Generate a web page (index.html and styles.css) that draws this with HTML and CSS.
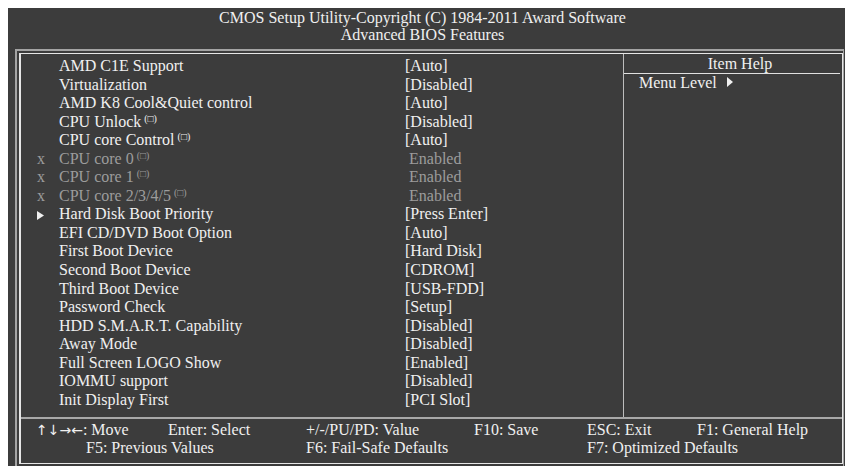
FILE: index.html
```html
<!DOCTYPE html>
<html lang="en">
<head>
    <meta charset="UTF-8">
    <title>Advanced BIOS Features</title>
    <link rel="stylesheet" href="styles.css">
</head>
<body>
    <div class="screen">
        <div class="title">
            <div>CMOS Setup Utility-Copyright (C) 1984-2011 Award Software</div>
            <div>Advanced BIOS Features</div>
        </div>

        <div class="frame">
            <div class="inner">
                <div class="main">
                    <div class="list">
                        <div class="row"><span class="mark"></span><span class="label">AMD C1E Support</span><span class="value">[Auto]</span></div>
                        <div class="row"><span class="mark"></span><span class="label">Virtualization</span><span class="value">[Disabled]</span></div>
                        <div class="row"><span class="mark"></span><span class="label">AMD K8 Cool&amp;Quiet control</span><span class="value">[Auto]</span></div>
                        <div class="row"><span class="mark"></span><span class="label">CPU Unlock<sup class="note">(□)</sup></span><span class="value">[Disabled]</span></div>
                        <div class="row"><span class="mark"></span><span class="label">CPU core Control<sup class="note">(□)</sup></span><span class="value">[Auto]</span></div>
                        <div class="row off"><span class="mark">x</span><span class="label">CPU core 0<sup class="note">(□)</sup></span><span class="value">&nbsp;Enabled</span></div>
                        <div class="row off"><span class="mark">x</span><span class="label">CPU core 1<sup class="note">(□)</sup></span><span class="value">&nbsp;Enabled</span></div>
                        <div class="row off"><span class="mark">x</span><span class="label">CPU core 2/3/4/5<sup class="note">(□)</sup></span><span class="value">&nbsp;Enabled</span></div>
                        <div class="row"><span class="mark"><svg class="tri" width="7" height="9" viewBox="0 0 7 9"><path d="M0 0 L7 4.5 L0 9 Z" fill="#f0f0f0"/></svg></span><span class="label">Hard Disk Boot Priority</span><span class="value">[Press Enter]</span></div>
                        <div class="row"><span class="mark"></span><span class="label">EFI CD/DVD Boot Option</span><span class="value">[Auto]</span></div>
                        <div class="row"><span class="mark"></span><span class="label">First Boot Device</span><span class="value">[Hard Disk]</span></div>
                        <div class="row"><span class="mark"></span><span class="label">Second Boot Device</span><span class="value">[CDROM]</span></div>
                        <div class="row"><span class="mark"></span><span class="label">Third Boot Device</span><span class="value">[USB-FDD]</span></div>
                        <div class="row"><span class="mark"></span><span class="label">Password Check</span><span class="value">[Setup]</span></div>
                        <div class="row"><span class="mark"></span><span class="label">HDD S.M.A.R.T. Capability</span><span class="value">[Disabled]</span></div>
                        <div class="row"><span class="mark"></span><span class="label">Away Mode</span><span class="value">[Disabled]</span></div>
                        <div class="row"><span class="mark"></span><span class="label">Full Screen LOGO Show</span><span class="value">[Enabled]</span></div>
                        <div class="row"><span class="mark"></span><span class="label">IOMMU support</span><span class="value">[Disabled]</span></div>
                        <div class="row"><span class="mark"></span><span class="label">Init Display First</span><span class="value">[PCI Slot]</span></div>
                    </div>

                    <div class="help">
                        <div class="help-head">Item Help</div>
                        <div class="help-body">Menu Level <svg class="tri-help" width="6" height="10" viewBox="0 0 6 10"><path d="M0 0 L6 5 L0 10 Z" fill="#f0f0f0"/></svg></div>
                    </div>
                </div>

                <div class="footer">
                    <span class="k1"><span class="arrows">↑↓→←</span>: Move</span>
                    <span class="k2">Enter: Select</span>
                    <span class="k3">+/-/PU/PD: Value</span>
                    <span class="k4">F10: Save</span>
                    <span class="k5">ESC: Exit</span>
                    <span class="k6">F1: General Help</span>
                    <span class="k7">F5: Previous Values</span>
                    <span class="k8">F6: Fail-Safe Defaults</span>
                    <span class="k9">F7: Optimized Defaults</span>
                </div>
            </div>
        </div>
    </div>
</body>
</html>
```

FILE: styles.css
```css
body {
    margin: 0;
    padding: 0;
    background-color: #fff;
    font-family: "Liberation Serif", "Times New Roman", serif;
    font-size: 16px;
    color: #f0f0f0;
}

.screen {
    margin: 8px 0 0 8px;
    width: 837px;
    height: 458px;
    background-color: #3c3c3c;
    display: flex;
    flex-direction: column;
}

.title {
    height: 41px;
    padding-top: 1px;
    box-sizing: border-box;
    text-align: center;
    line-height: 17px;
    padding-right: 8px;
}

.frame {
    margin-left: 7px;
    width: 829px;
    flex: 1;
    box-sizing: border-box;
    border: 2px solid #a4a4a4;
    border-right-width: 1px;
    border-bottom: none;
    padding: 2px 0 2px 2px;
    display: flex;
}

.inner {
    flex: 1;
    border: 1px solid #e6e6e6;
    border-left-width: 2px;
    display: flex;
    flex-direction: column;
}

.main {
    height: 363px;
    display: flex;
    border-bottom: 2px solid #a8a8a8;
}

.list {
    width: 602px;
    padding-top: 3px;
    border-right: 1px solid #bdbdbd;
}

.row {
    display: flex;
    line-height: 18.55px;
    height: 18.55px;
    white-space: nowrap;
}

.mark {
    width: 22px;
    margin-left: 16px;
}

.label {
    width: 346px;
}

.row.off {
    color: #9c9c9c;
}

.note {
    font-size: 10px;
    line-height: 0;
    vertical-align: 5px;
    margin-left: 3px;
}

.tri {
    vertical-align: -1px;
}

.help {
    flex: 1;
}

.help-head {
    height: 19px;
    line-height: 19px;
    text-align: center;
    padding-left: 16px;
    border-bottom: 1px solid #e0e0e0;
    margin-right: 2px;
}

.help-body {
    padding-left: 15px;
    line-height: 18.55px;
}

.tri-help {
    margin-left: 6px;
    vertical-align: 1px;
}

.footer {
    display: grid;
    grid-template-columns: 132px 138px 168px 113px 110px auto;
    line-height: 18px;
    padding: 2px 0 0 15px;
    white-space: nowrap;
}

.arrows {
    font-family: "DejaVu Sans", sans-serif;
    font-size: 14px;
    line-height: 0;
}

.k7 {
    grid-column: 1 / span 2;
    padding-left: 50px;
}

.k8 {
    grid-column: 3 / span 2;
}

.k9 {
    grid-column: 5 / span 2;
}
```
